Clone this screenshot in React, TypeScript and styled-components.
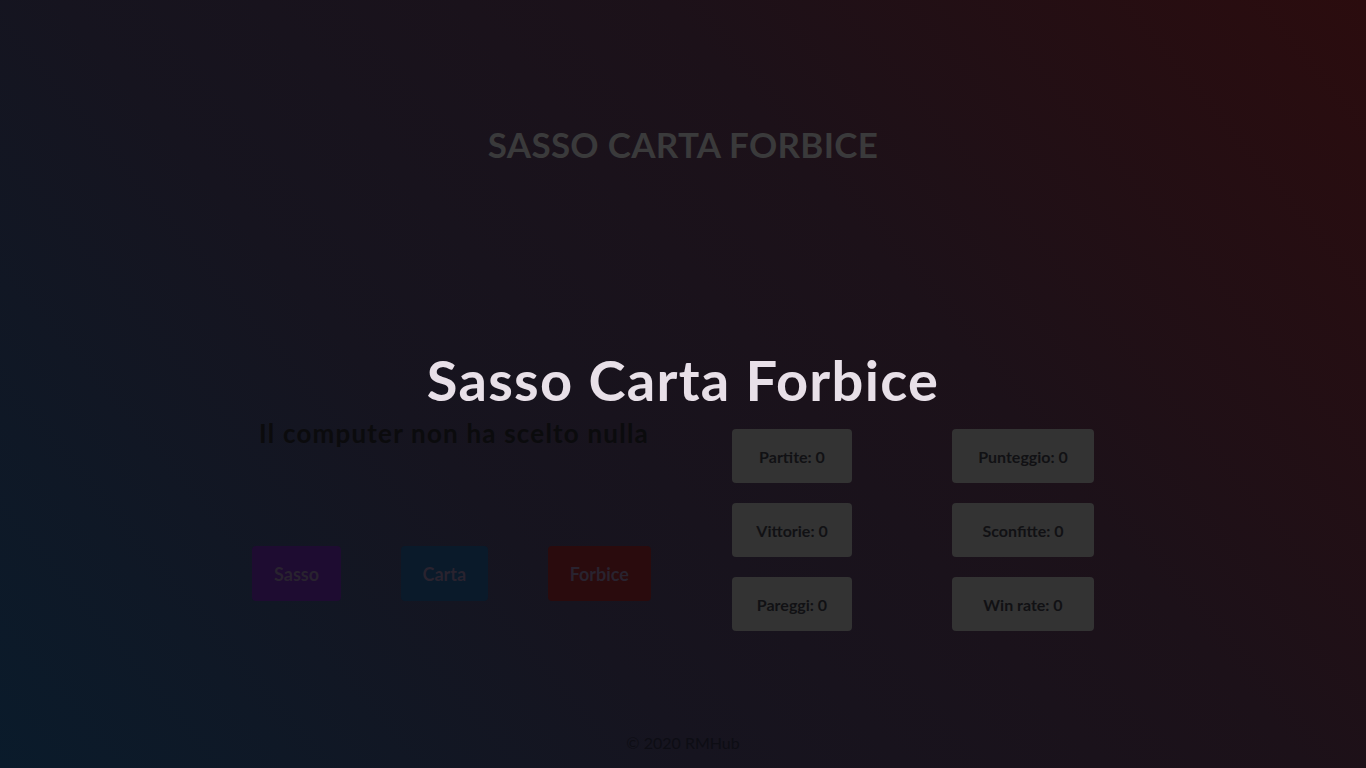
import React from "react";
import styled, { createGlobalStyle } from "styled-components";

const Global = createGlobalStyle`
  html, body { margin: 0; padding: 0; }
  body {
    font-family: "Lato", "Noto Sans", sans-serif;
    background: #16141f;
  }
`;

const Page = styled.div`
  width: 100%;
  min-height: 768px;
  height: 768px;
  box-sizing: border-box;
  background: linear-gradient(50deg, #0a1b2b 0%, #16141f 35%, #1c1119 65%, #2b0c0e 100%);
  display: flex;
  flex-direction: column;
  align-items: center;
  overflow: hidden;
`;

const Header = styled.h1`
  margin: 124px 0 0;
  font-size: 35px;
  font-weight: 700;
  line-height: 40px;
  color: #3a3a3b;
  letter-spacing: 0.3px;
`;

const Title = styled.h2`
  margin: 186px 0 0;
  font-size: 56px;
  line-height: 60px;
  font-weight: 700;
  color: #e8e0e8;
  letter-spacing: 1.3px;
`;

const Main = styled.div`
  display: flex;
  width: 842px;
  margin-top: 6px;
  margin-left: -20px;
  gap: 81px;
`;

const LeftCol = styled.div`
  width: 399px;
  display: flex;
  flex-direction: column;
`;

const Message = styled.p`
  margin: 0 0 0 7px;
  font-size: 26px;
  font-weight: 700;
  line-height: 34px;
  letter-spacing: 1.2px;
  color: #0b0b0d;
  white-space: nowrap;
`;

const Choices = styled.div`
  display: flex;
  justify-content: space-between;
  margin-top: 96px;
`;

const Choice = styled.button<{ $bg: string }>`
  height: 55px;
  padding: 0 22px;
  border: none;
  border-radius: 4px;
  background: ${(p) => p.$bg};
  color: #29232f;
  font-family: inherit;
  font-size: 18px;
  font-weight: 700;
  cursor: pointer;
`;

const Stats = styled.div`
  display: grid;
  grid-template-columns: 120px 142px;
  column-gap: 100px;
  row-gap: 20px;
  margin-top: 13px;
  align-content: start;
`;

const Stat = styled.div`
  height: 54px;
  border-radius: 4px;
  background: #333333;
  color: #111114;
  display: flex;
  align-items: center;
  justify-content: center;
  font-size: 16px;
  font-weight: 700;
`;

const Footer = styled.footer`
  margin-top: auto;
  margin-bottom: 16px;
  font-size: 16px;
  color: #0d0d14;
`;

export default function App() {
  return (
    <>
      <Global />
      <Page>
        <Header>SASSO CARTA FORBICE</Header>
        <Title>Sasso Carta Forbice</Title>
        <Main>
          <LeftCol>
            <Message>Il computer non ha scelto nulla</Message>
            <Choices>
              <Choice $bg="#1e0c31">Sasso</Choice>
              <Choice $bg="#0a1a2a">Carta</Choice>
              <Choice $bg="#2a0b0d">Forbice</Choice>
            </Choices>
          </LeftCol>
          <Stats>
            <Stat>Partite: 0</Stat>
            <Stat>Punteggio: 0</Stat>
            <Stat>Vittorie: 0</Stat>
            <Stat>Sconfitte: 0</Stat>
            <Stat>Pareggi: 0</Stat>
            <Stat>Win rate: 0</Stat>
          </Stats>
        </Main>
        <Footer>© 2020 RMHub</Footer>
      </Page>
    </>
  );
}
